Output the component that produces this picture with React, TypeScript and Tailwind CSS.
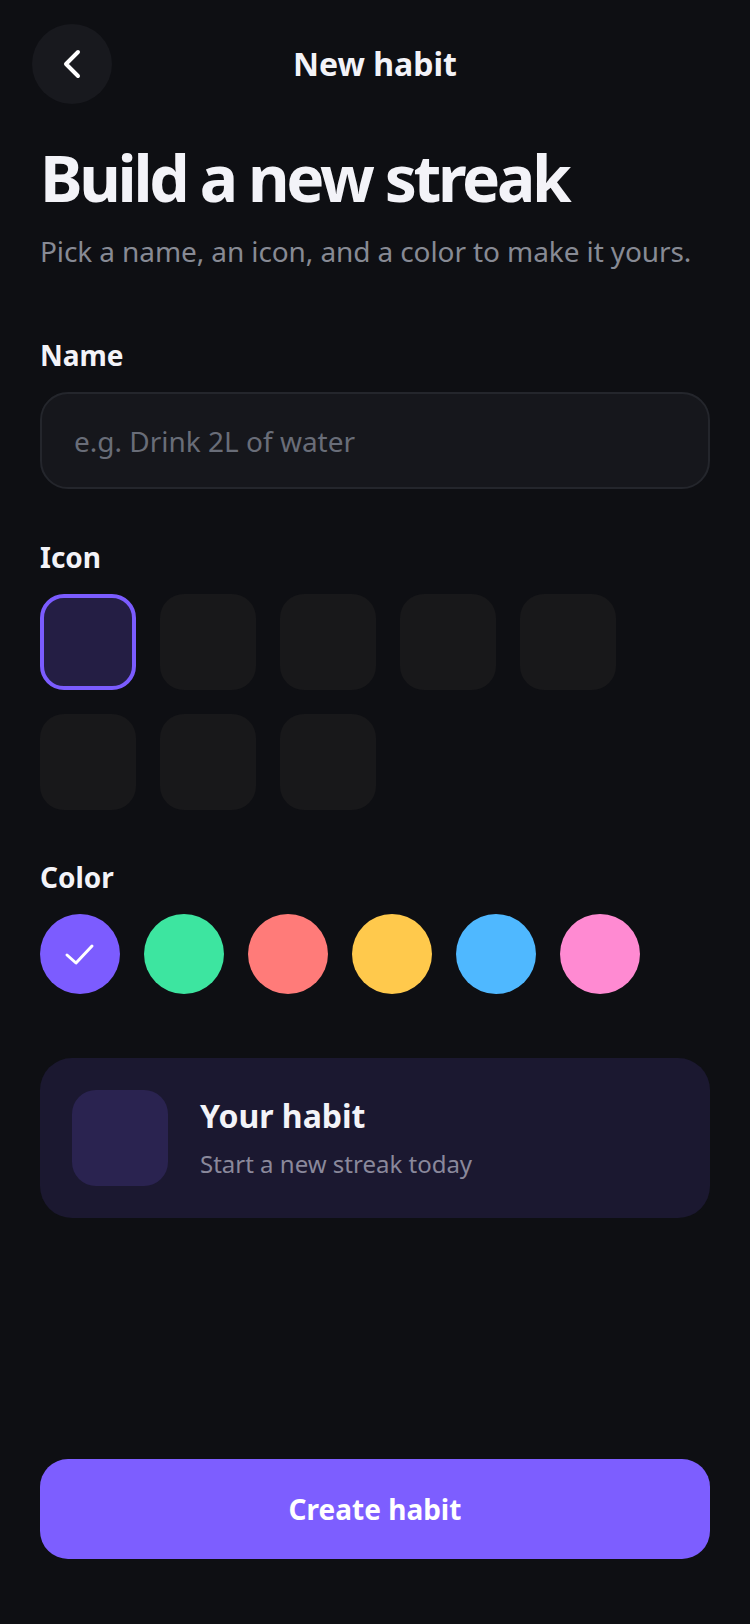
import React from "react";

const font = { fontFamily: '"Noto Sans", "Open Sans", sans-serif' };

export default function App() {
  const colors = ["#7c5cff", "#3de5a0", "#ff7b79", "#ffc94c", "#4fb8ff", "#ff8ad2"];
  return (
    <div
      className="w-[750px] h-[1624px] bg-[#0e0f13] flex flex-col text-[#f3f3f8]"
      style={font}
    >
      {/* header */}
      <div className="grid grid-cols-[80px_1fr_80px] items-center px-8 pt-6">
        <button className="w-20 h-20 rounded-full bg-[#18191e] flex items-center justify-center">
          <svg width="40" height="40" viewBox="0 0 40 40" fill="none">
            <path d="M26 8 L14 20 L26 32" stroke="#ffffff" strokeWidth="4" strokeLinecap="round" strokeLinejoin="round" />
          </svg>
        </button>
        <div className="text-center text-[32px] leading-[40px] font-bold">New habit</div>
        <div />
      </div>

      <div className="px-10 flex flex-col flex-1">
        <h1 className="mt-[36px] text-[64px] leading-[76px] font-bold tracking-[-3.3px]">Build a new streak</h1>
        <p className="mt-[15px] text-[28px] leading-[40px] tracking-[-0.1px] text-[#878a94]">
          Pick a name, an icon, and a color to make it yours.
        </p>

        <div className="mt-[64px] text-[28px] leading-[40px] font-bold">Name</div>
        <div className="mt-[17px] h-[97px] rounded-[28px] border-2 border-[#24262c] bg-[#16171c] flex items-center pl-8">
          <span className="text-[28px] text-[#696d78]">e.g. Drink 2L of water</span>
        </div>

        <div className="mt-[48px] text-[28px] leading-[40px] font-bold">Icon</div>
        <div className="mt-[17px] grid grid-cols-[repeat(5,96px)] gap-6">
          {Array.from({ length: 8 }).map((_, i) =>
            i === 0 ? (
              <div key={i} className="w-24 h-24 rounded-[24px] border-4 border-[#7b5cff] bg-[#241e44]" />
            ) : (
              <div key={i} className="w-24 h-24 rounded-[24px] bg-[#18181a]" />
            )
          )}
        </div>

        <div className="mt-[47px] text-[28px] leading-[40px] font-bold">Color</div>
        <div className="mt-[17px] flex gap-6">
          {colors.map((c, i) => (
            <div
              key={c}
              className="w-20 h-20 rounded-full flex items-center justify-center"
              style={{ backgroundColor: c }}
            >
              {i === 0 && (
                <svg width="40" height="40" viewBox="0 0 40 40" fill="none">
                  <path d="M7 21 L16 29 L32 12" stroke="#ffffff" strokeWidth="3" strokeLinecap="round" strokeLinejoin="round" />
                </svg>
              )}
            </div>
          ))}
        </div>

        <div className="mt-[64px] h-[160px] rounded-[32px] bg-[#1b1830] flex items-center px-8 gap-8">
          <div className="w-24 h-24 rounded-[24px] bg-[#2a2350]" />
          <div className="flex flex-col">
            <div className="text-[32px] leading-[40px] font-bold">Your habit</div>
            <div className="mt-[12px] text-[24px] leading-[32px] text-[#8a889b]">Start a new streak today</div>
          </div>
        </div>

        <div className="flex-1" />
        <button className="mb-[65px] h-[100px] rounded-[28px] bg-[#7d5eff] text-white text-[28px] font-bold">
          Create habit
        </button>
      </div>
    </div>
  );
}
